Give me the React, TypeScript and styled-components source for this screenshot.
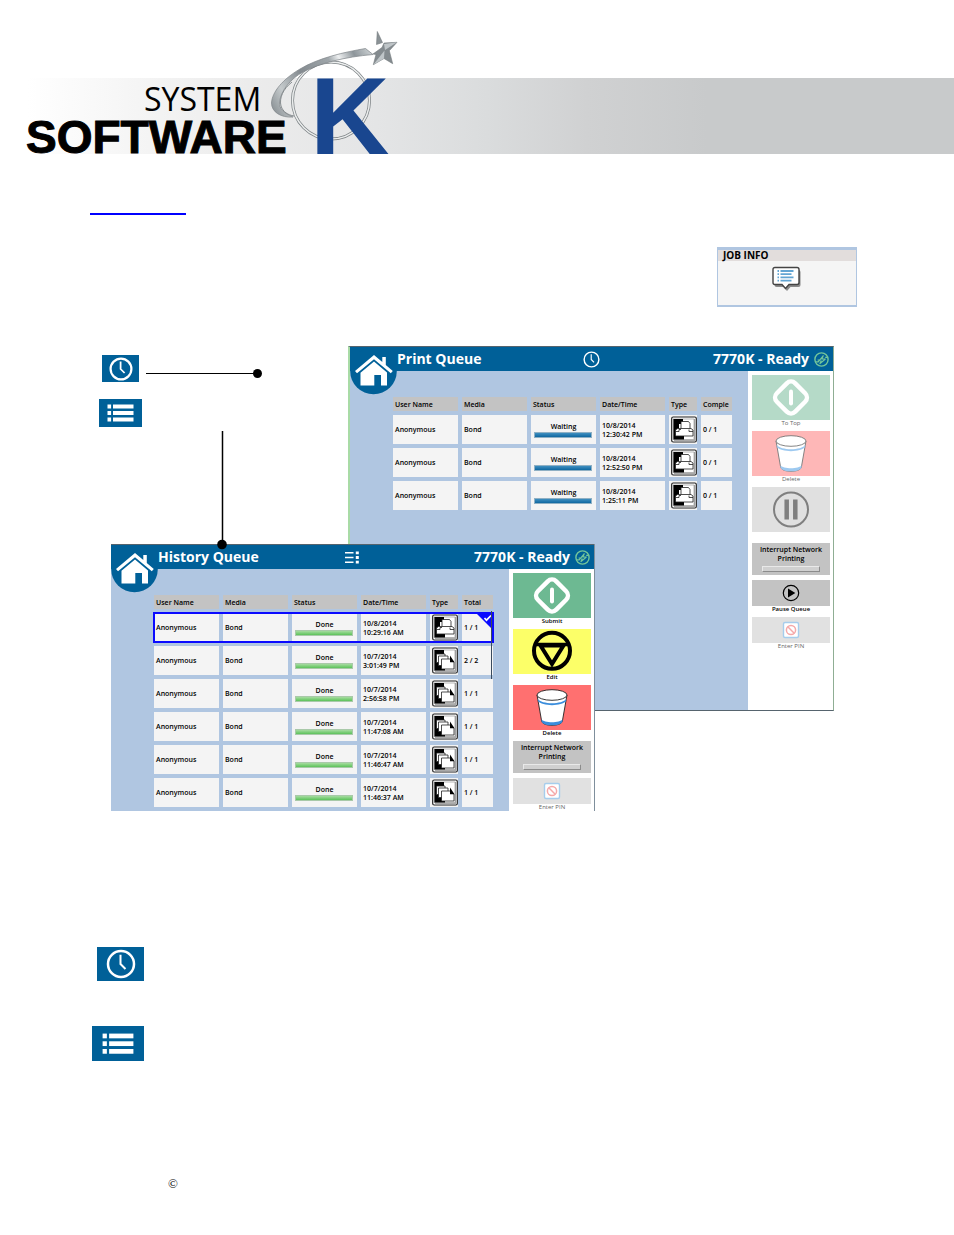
import React from "react";
import styled, { createGlobalStyle, css } from "styled-components";

const BLUE = "#006098";
const PANE = "#b0c6e1";

const GlobalStyle = createGlobalStyle`
  *, *::before, *::after { box-sizing: border-box; }
  body {
    margin: 0;
    background: #fff;
    color: #000;
    font-family: "Open Sans", "Noto Sans", sans-serif;
  }
  svg { display: block; }
`;

const buttonReset = css`
  border: 0;
  padding: 0;
  margin: 0;
  background: none;
  color: inherit;
  font: inherit;
  cursor: pointer;
`;

/* ---------- document ---------- */

const Banner = styled.header`
  height: 154px;
  padding: 30px 0 0 20px;
  background: linear-gradient(90deg, #ffffff 0, #f5f5f5 110px, #ececec 220px, #e4e5e6 350px, #dadcdd 460px, #d0d1d2 560px, #c8cacb 680px)
    no-repeat right bottom / calc(100% - 27px) 76px;
`;

const Content = styled.main`
  max-width: 954px;
  display: flex;
  flex-direction: column;
`;

const SectionLink = styled.a`
  position: relative;
  width: 96px;
  height: 14px;
  margin: 47px 0 0 90px;
  border-bottom: 2px solid #0000ff;
`;

const JobInfo = styled.section`
  align-self: flex-end;
  width: 140px;
  height: 60px;
  margin: 32px 97px 0 0;
  border: solid ${PANE};
  border-width: 3px 1px 2px;
  background: #f5f5f5;
`;

const JobInfoTitle = styled.h2`
  margin: 0 0 5px;
  padding-left: 5px;
  background: #e2dddc;
  font-size: 10px;
  line-height: 11px;
  font-weight: 700;
`;

const JobInfoButton = styled.button`
  ${buttonReset}
  display: block;
  margin: 0 auto;
`;

const Figure = styled.figure`
  position: relative;
  display: grid;
  align-items: start;
  justify-items: start;
  margin: 39px 0 0;
  & > * { grid-area: 1 / 1; }
`;

const Leaders = styled.svg`
  position: absolute;
  left: 0;
  top: 0;
`;

const Legend = styled.div`
  display: grid;
  justify-items: center;
  gap: 17px;
  padding: 9px 0 0 99px;
`;

const Notes = styled.div`
  display: grid;
  justify-items: end;
  align-self: flex-start;
  gap: 45px;
  padding: 136px 0 0 92px;
`;

const Chip = styled.span<{ $w: number; $h: number }>`
  display: grid;
  place-items: center;
  width: ${(p) => p.$w}px;
  height: ${(p) => p.$h}px;
  background: ${BLUE};
`;

const Footer = styled.footer`
  padding: 115px 0 40px 168px;
  font-family: "Liberation Serif", serif;
  font-size: 13px;
  line-height: 16px;
`;

/* ---------- printer windows ---------- */

const Window = styled.section<{ $framed?: boolean }>`
  position: relative;
  display: grid;
  grid-template-columns: 398px 1fr;
  grid-template-rows: 24px minmax(0, 1fr);
  border-top: 1px solid #56646e;
  background: ${PANE};
  ${(p) =>
    p.$framed
      ? css`
          width: 486px;
          min-height: 365px;
          margin-left: 348px;
          border-left: 2px solid #a9dba6;
          border-right: 1px solid #8fae94;
          border-bottom: 1px solid #56646e;
        `
      : css`
          width: 483px;
          height: 267px;
          margin: 198px 0 0 111px;
          box-shadow: 1px 0 #7f8f9c;
        `}
`;

const WindowBar = styled.header`
  grid-column: 1 / -1;
  display: grid;
  grid-template-columns: 1fr auto 1fr;
  align-items: center;
  padding: 0 4px 0 47px;
  background: ${BLUE};
  color: #fff;
`;

const WindowTitle = styled.h2`
  margin: 0;
  font-size: 14px;
  line-height: 24px;
  font-weight: 700;
  white-space: nowrap;
`;

const BarIcon = styled.span`
  margin-right: 44px;
`;

const MachineState = styled.div`
  display: flex;
  align-items: center;
  justify-content: flex-end;
  gap: 5px;
  font-size: 14px;
  line-height: 24px;
  font-weight: 700;
  white-space: nowrap;
`;

const HomeButton = styled.button`
  ${buttonReset}
  position: absolute;
  left: 0;
  top: 0;
`;

const ListPane = styled.div`
  position: relative;
  height: 0;
  min-height: 100%;
  padding: 22px 0 0 39px;
  overflow: hidden;
`;

const ScrollMark = styled.span`
  position: absolute;
  right: 17px;
  top: 42px;
  width: 1px;
  height: 68px;
  background: #3a4a5c;
`;

const Table = styled.table`
  width: 347px;
  table-layout: fixed;
  border-collapse: separate;
  border-spacing: 4px;
  font-size: 7px;
  line-height: 9px;
  font-weight: 600;
`;

const HeadCell = styled.th<{ $w: number }>`
  width: ${(p) => p.$w}px;
  height: 14px;
  padding: 0 0 0 2px;
  background: #c3c3c3;
  text-align: left;
  font-weight: 600;
  white-space: nowrap;
`;

const Row = styled.tr<{ $selected?: boolean }>`
  position: relative;
  ${(p) => p.$selected && css`outline: 2px solid #0a0aff; outline-offset: -1px;`}
`;

const Cell = styled.td`
  height: 29px;
  padding: 0 0 0 2px;
  background: #f4f4f4;
  white-space: nowrap;
  vertical-align: middle;
`;

const StatusText = styled.div`
  padding-right: 2px;
  text-align: center;
`;

const StatusBar = styled.div<{ $done?: boolean }>`
  height: 6px;
  margin: 1px 4px 0 1px;
  border: 1px solid ${(p) => (p.$done ? "#a9c9a9" : "#8fb0c4")};
  background: ${(p) =>
    p.$done ? "linear-gradient(#a6dca0, #5cc25a)" : "linear-gradient(#3f8fc0, #0f67a0)"};
`;

const SelectedMark = styled.svg`
  position: absolute;
  right: 0;
  top: 0;
`;

const Sidebar = styled.nav`
  display: flex;
  flex-direction: column;
  gap: 4px;
  padding: 4px 3px 0 4px;
  background: #fff;
`;

const ActionButton = styled.button<{ $dim?: boolean }>`
  ${buttonReset}
  display: block;
  width: 78px;
  color: ${(p) => (p.$dim ? "#666" : "#000")};
  font-size: 6px;
  line-height: 7px;
  font-weight: ${(p) => (p.$dim ? 400 : 600)};
`;

const Tile = styled.span<{ $bg: string; $small?: boolean }>`
  display: block;
  height: ${(p) => (p.$small ? 26 : 45)}px;
  background: ${(p) => p.$bg};
`;

const ActionLabel = styled.span`
  display: block;
  height: 7px;
`;

const InterruptButton = styled.button`
  ${buttonReset}
  width: 78px;
  height: 32px;
  margin-bottom: 1px;
  padding-top: 2px;
  background: #c3c3c3;
  font-size: 7px;
  line-height: 9px;
  font-weight: 600;
  display: flex;
  flex-direction: column;
  align-items: center;
  white-space: nowrap;
`;

const InterruptLamp = styled.span`
  width: 58px;
  height: 6px;
  margin-top: 3px;
  border: 1px solid #e9e9e9;
  border-right-color: #8c8c8c;
  border-bottom-color: #8c8c8c;
  background: #d0d0d0;
`;

/* ---------- icons ---------- */

const Clock = ({ size, stroke = 2 }: { size: number; stroke?: number }) => (
  <svg width={size} height={size} viewBox="0 0 24 24" fill="none" stroke="#fff">
    <circle cx="12" cy="12" r="10.4" strokeWidth={stroke} />
    <path d="M11.6 4.6V12l4 4" strokeWidth={stroke * 0.8} />
  </svg>
);

const Bullets = ({ size }: { size: number }) => (
  <svg width={size} height={(size * 18) / 27} viewBox="0 0 27 18" fill="#fff">
    {[0.5, 7, 13.5].map((y) => (
      <g key={y}>
        <rect x="0.5" y={y} width="3.6" height="4" />
        <rect x="6" y={y} width="20.5" height="4" />
      </g>
    ))}
  </svg>
);

const HistoryGlyph = () => (
  <svg width="15" height="13" viewBox="0 0 15 13" fill="#fff">
    <path d="M0 1h8.500v1.600H0zM0 5.700h8.500v1.600H0zM0 10.400h8.500V12H0zM10.800 0.500h3v2.800h-3zM10.800 5.100h3v2.800h-3zM10.800 9.700h3v2.800h-3z" />
  </svg>
);

const EcoGlyph = () => (
  <svg width="15" height="15" viewBox="0 0 15 15" fill="none" stroke="#74c69a" strokeLinejoin="round">
    <circle cx="7.500" cy="7.500" r="6.600" strokeWidth="1.400" />
    <path d="M1.400 9.800h2.800L9.200 3.800 7.900 7h3.800M13.600 5.400h-2.400M3.600 8l2.800 0M11.400 7L6 11.600l1.300-3.200" strokeWidth="1.200" />
  </svg>
);

const House = () => (
  <svg width="47" height="48" viewBox="0 0 47 48">
    <circle cx="23.500" cy="24" r="23.300" fill={BLUE} />
    <path d="M24 8 5 24l2 2.300L24 12.300l16.800 14 2-2.300-7-6V10h-3.500v5z" fill="#fff" />
    <path d="M24 14.500 10.500 25.800V38.500h13.800V28H31v10.500h6V25.500z" fill="#fff" />
  </svg>
);

const Diamond = () => (
  <svg width="78" height="45" viewBox="0 0 78 45" fill="none" stroke="#fff" strokeLinecap="round">
    <rect x="26" y="9.500" width="26" height="26" rx="6" strokeWidth="4.500" transform="rotate(45 39 22.500)" />
    <path d="M39 16.500v12" strokeWidth="4" />
  </svg>
);

const Bucket = ({ dim }: { dim?: boolean }) => (
  <svg width="78" height="45" viewBox="0 0 78 45" stroke={dim ? "#777" : "#222"} strokeWidth="0.900">
    <path d="M24 10l4.700 26.500C30 41.600 48 41.600 49.300 36.500L54 10z" fill="#fff" />
    <path d="M28.200 34.200c3 4 18.600 4 21.600 0l-.6 2.700c-2 4.500-18.400 4.500-20.400 0z" fill={dim ? "#9dc9f0" : "#3a8ddc"} stroke="none" />
    <path d="M24.700 14c4 5.600 24.600 5.600 28.600 0l-.3 2.100c-4 5.400-24 5.400-28 0z" fill={dim ? "#9dc9f0" : "#3a8ddc"} stroke="none" />
    <ellipse cx="39" cy="10" rx="15" ry="5.300" fill="#fff" />
  </svg>
);

const Pause = () => (
  <svg width="78" height="45" viewBox="0 0 78 45" fill="none" stroke="#7f7f7f">
    <circle cx="39" cy="22.500" r="17" strokeWidth="2" />
    <path d="M34.700 12.500v20M43.300 12.500v20" strokeWidth="4.500" />
  </svg>
);

const EditGlyph = () => (
  <svg width="78" height="45" viewBox="0 0 78 45" fill="none" stroke="#000">
    <circle cx="39" cy="21.800" r="18" strokeWidth="4" />
    <path d="M23 15.500h32" strokeWidth="3.500" />
    <path d="M27.500 16.500h23L39 35z" strokeWidth="4" />
  </svg>
);

const Play = () => (
  <svg width="78" height="26" viewBox="0 0 78 26">
    <circle cx="39" cy="13" r="7.700" fill="none" stroke="#000" strokeWidth="1.200" />
    <path d="M36 8.500v9l7.300-4.500z" />
  </svg>
);

const NoEntry = () => (
  <svg width="78" height="26" viewBox="0 0 78 26" fill="none">
    <rect x="31.500" y="5.500" width="15" height="15" rx="1.500" fill="#fff" stroke="#a6cdec" strokeWidth="1.400" />
    <circle cx="39" cy="13" r="4.600" stroke="#f5a9a9" strokeWidth="1.500" />
    <path d="M35.800 9.800l6.400 6.400" stroke="#f5a9a9" strokeWidth="1.500" />
  </svg>
);

const TypeGlyph = ({ copy }: { copy?: boolean }) => (
  <svg width="26" height="27" viewBox="0 0 26 27" stroke="#222" strokeWidth="0.800">
    <rect x="0.700" y="1" width="24.600" height="25" rx="1.500" fill="#fff" strokeWidth="1.200" />
    <path d="M23.500 3v21.500H3" fill="none" stroke="#aaa" strokeWidth="1.400" />
    <rect x="2.500" y="3" width="20.500" height="20.500" fill="#fff" stroke="#888" strokeWidth="0.600" />
    <path d="M2.500 3H12v5H8v9h5v6.500H2.500z" fill="#000" stroke="none" />
    {copy ? (
      <>
        <path d="M4.500 7H13V15.500H4.500z" fill="#fff" />
        <path d="M6.500 9h9.500v9.500H6.500z" fill="#fff" />
        <path d="M9.500 12h9l3.500 3.200V22H9.500z" fill="#fff" />
        <path d="M18 8.500l4.500 6.700H18z" fill="#000" stroke="none" />
      </>
    ) : (
      <>
        <path d="M10 5.500h7.500l1.500 2V14h-9z" fill="#fff" />
        <path d="M4.500 14l2-1.500h13.500l2 1.500v6h-17.500z" fill="#fff" />
        <path d="M4.500 15.500h3.500v-2h2M18 13.500v2h4" fill="none" />
      </>
    )}
  </svg>
);

const Bubble = () => (
  <svg width="32" height="26" viewBox="0 0 32 26">
    <path d="M5.500 4h22q2 0 2 2v13q0 2-2 2h-8l-3.500 4-3.500-4H5.500q-2 0-2-2V6q0-2 2-2z" fill="#666" opacity=".75" />
    <path d="M4 1.500h22q2 0 2 2v13q0 2-2 2h-8L14.500 22.500 11 18.500H4q-2 0-2-2v-13q0-2 2-2z" fill="#fff" stroke="#444" strokeWidth="1.400" />
    <path d="M9.500 5h13M9.500 8.200h11M9.500 11.400h13M9.500 14.600h11" stroke="#62a5d3" strokeWidth="1.800" />
    <path d="M6.500 5H8M6.500 8.200H8M6.500 11.400H8M6.500 14.600H8" stroke="#62a5d3" strokeWidth="1.800" />
  </svg>
);

const Logo = () => (
  <svg width="400" height="160" viewBox="20 30 400 160" role="img" aria-label="System Software K">
    <defs>
      <linearGradient id="steel" x1="272" y1="110" x2="380" y2="50" gradientUnits="userSpaceOnUse">
        <stop offset="0" stopColor="#8b9296" />
        <stop offset=".15" stopColor="#c5cacc" />
        <stop offset=".35" stopColor="#848b90" />
        <stop offset=".6" stopColor="#9fa6aa" />
        <stop offset=".68" stopColor="#eef0f1" />
        <stop offset=".8" stopColor="#8d959a" />
        <stop offset=".95" stopColor="#d3d8da" />
        <stop offset="1" stopColor="#80878b" />
      </linearGradient>
    </defs>
    <ellipse cx="331" cy="100.500" rx="38.500" ry="38.500" fill="none" stroke="#7d8386" strokeWidth="3" />
    <ellipse cx="331" cy="100.500" rx="38.500" ry="38.500" fill="none" stroke="#eceeee" strokeWidth="1.500" />
    <path
      d="M373 54.500 365.500 48.500C345 52 318 58 300 69 283 79 272 92 271.500 103 271.500 112 281 118 293 117 284 113 279 109 279.500 102 281 91 290 79 303 72 320 63 345 57 373 54.500Z"
      fill="url(#steel)" stroke="#7c8386" strokeWidth=".7"
    />
    <path d="M292 82C283 89 279 98 281 106 283 112 288 115 294 116" fill="none" stroke="#858b8e" strokeWidth="1" />
    <path d="M377.300 31.500 382.500 42.500 376.500 44.500Z" fill="#8b9296" stroke="#737a7e" strokeWidth=".6" />
    <path d="M384 43 397 42.300 389.300 50.700 392.700 63.700 384 58.500 373.300 64.700 376 54.500 373 54 382 47.500Z" fill="#848b8f" stroke="#737a7e" strokeWidth=".6" />
    <path d="M385 50 397 42.300 384 44ZM384.500 50.500 384 58.500 373.300 64.700Z" fill="#bfc5c8" />
    <text x="144" y="111" fontFamily='"Open Sans", sans-serif' fontSize="32" fill="#000">SYSTEM</text>
    <text x="26" y="153" fontFamily='"Liberation Sans", Arial, sans-serif' fontSize="46" fontWeight="700" fill="#000" stroke="#000" strokeWidth="1">SOFTWARE</text>
    <text x="310" y="154" fontFamily='"Liberation Sans", Arial, sans-serif' fontSize="110" fontWeight="700" fill="#19468f">K</text>
  </svg>
);

/* ---------- data ---------- */

type Job = { date: string; time: string; count: string; copy?: boolean };

const waiting: Job[] = [
  { date: "10/8/2014", time: "12:30:42 PM", count: "0 / 1" },
  { date: "10/8/2014", time: "12:52:50 PM", count: "0 / 1" },
  { date: "10/8/2014", time: "1:25:11 PM", count: "0 / 1" },
];

const finished: Job[] = [
  { date: "10/8/2014", time: "10:29:16 AM", count: "1 / 1" },
  { date: "10/7/2014", time: "3:01:49 PM", count: "2 / 2", copy: true },
  { date: "10/7/2014", time: "2:56:58 PM", count: "1 / 1", copy: true },
  { date: "10/7/2014", time: "11:47:08 AM", count: "1 / 1", copy: true },
  { date: "10/7/2014", time: "11:46:47 AM", count: "1 / 1", copy: true },
  { date: "10/7/2014", time: "11:46:37 AM", count: "1 / 1", copy: true },
];

const columns: [string, number][] = [
  ["User Name", 65],
  ["Media", 65],
  ["Status", 65],
  ["Date/Time", 65],
  ["Type", 28],
];

function JobTable({ jobs, done, countTitle }: { jobs: Job[]; done?: boolean; countTitle: string }) {
  return (
    <Table>
      <thead>
        <tr>
          {columns.map(([name, w]) => (
            <HeadCell key={name} $w={w}>{name}</HeadCell>
          ))}
          <HeadCell $w={31}>{countTitle}</HeadCell>
        </tr>
      </thead>
      <tbody>
        {jobs.map((job, i) => {
          const selected = done && i === 0;
          return (
            <Row key={job.time} $selected={selected}>
              <Cell>Anonymous</Cell>
              <Cell>Bond</Cell>
              <Cell>
                <StatusText>{done ? "Done" : "Waiting"}</StatusText>
                <StatusBar $done={done} />
              </Cell>
              <Cell>{job.date}<br />{job.time}</Cell>
              <Cell><TypeGlyph copy={job.copy} /></Cell>
              <Cell>
                {job.count}
                {selected && (
                  <SelectedMark width="17" height="17" viewBox="0 0 17 17">
                    <path d="M0 0h17v17z" fill="#0a0aff" />
                    <path d="M8.500 5l2 2.200L15 2.500" fill="none" stroke="#fff" strokeWidth="1.700" />
                  </SelectedMark>
                )}
              </Cell>
            </Row>
          );
        })}
        {done && (
          <Row aria-hidden="true">
            <Cell /><Cell /><Cell /><Cell /><Cell /><Cell />
          </Row>
        )}
      </tbody>
    </Table>
  );
}

function Action({ label, bg, small, dim, name, children }: {
  label: string; bg: string; small?: boolean; dim?: boolean; name?: string; children: React.ReactNode;
}) {
  return (
    <ActionButton type="button" $dim={dim} aria-label={name}>
      <Tile $bg={bg} $small={small}>{children}</Tile>
      <ActionLabel>{label}</ActionLabel>
    </ActionButton>
  );
}

const Interrupt = () => (
  <InterruptButton type="button">
    <span>Interrupt Network</span>
    <span>Printing</span>
    <InterruptLamp />
  </InterruptButton>
);

function QueueWindow({ title, icon, framed, list, actions }: {
  title: string; icon: React.ReactNode; framed?: boolean; list: React.ReactNode; actions: React.ReactNode;
}) {
  return (
    <Window $framed={framed}>
      <WindowBar>
        <WindowTitle>{title}</WindowTitle>
        <BarIcon>{icon}</BarIcon>
        <MachineState>7770K - Ready <EcoGlyph /></MachineState>
      </WindowBar>
      <ListPane>{list}</ListPane>
      <Sidebar>{actions}</Sidebar>
      <HomeButton type="button" aria-label="Home"><House /></HomeButton>
    </Window>
  );
}

export default function App() {
  return (
    <>
      <GlobalStyle />
      <Banner><Logo /></Banner>
      <Content>
        <SectionLink href="#job-info" aria-label="Job info" />
        <JobInfo id="job-info">
          <JobInfoTitle>JOB INFO</JobInfoTitle>
          <JobInfoButton type="button" aria-label="Open job info"><Bubble /></JobInfoButton>
        </JobInfo>
        <Figure>
          <Legend>
            <Chip $w={37} $h={27}><Clock size={24} stroke={2.2} /></Chip>
            <Chip $w={43} $h={28}><Bullets size={27} /></Chip>
          </Legend>
          <QueueWindow
            framed
            title="Print Queue"
            icon={<Clock size={17} />}
            list={<JobTable jobs={waiting} countTitle="Comple" />}
            actions={
              <>
                <Action label="To Top" bg="#b5dac8" dim><Diamond /></Action>
                <Action label="Delete" bg="#feb7b7" dim><Bucket dim /></Action>
                <Action label="" name="Pause" bg="#e0e0e0" dim><Pause /></Action>
                <Interrupt />
                <Action label="Pause Queue" bg="#c3c3c3" small><Play /></Action>
                <Action label="Enter PIN" bg="#e1e1e1" small dim><NoEntry /></Action>
              </>
            }
          />
          <QueueWindow
            title="History Queue"
            icon={<HistoryGlyph />}
            list={<><JobTable jobs={finished} done countTitle="Total" /><ScrollMark /></>}
            actions={
              <>
                <Action label="Submit" bg="#6db992"><Diamond /></Action>
                <Action label="Edit" bg="#fcff68"><EditGlyph /></Action>
                <Action label="Delete" bg="#ff7070"><Bucket /></Action>
                <Interrupt />
                <Action label="Enter PIN" bg="#e1e1e1" small dim><NoEntry /></Action>
              </>
            }
          />
          <Leaders width="264" height="204" viewBox="0 0 264 204" aria-hidden="true">
            <path d="M146 27.500H258" stroke="#000" strokeWidth="1" />
            <path d="M222.500 85V198" stroke="#000" strokeWidth="1.500" />
            <circle cx="257.500" cy="27.500" r="4.500" />
            <circle cx="222" cy="198.500" r="4.800" />
          </Leaders>
        </Figure>
        <Notes>
          <Chip $w={47} $h={34}><Clock size={30} /></Chip>
          <Chip $w={52} $h={35}><Bullets size={32} /></Chip>
        </Notes>
      </Content>
      <Footer>©</Footer>
    </>
  );
}
